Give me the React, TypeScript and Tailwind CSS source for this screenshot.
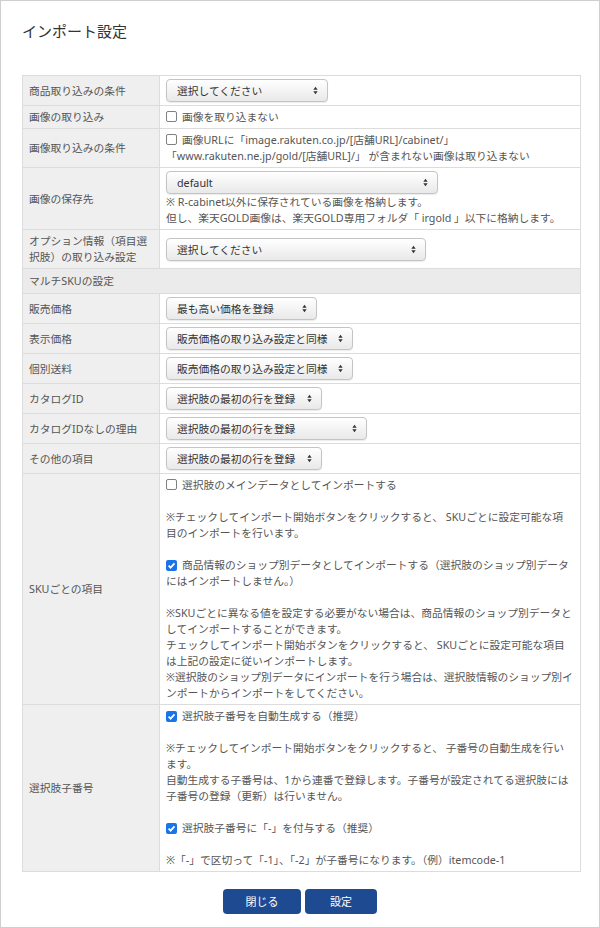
import React from 'react';

const cellBorder = 'border border-[#dcdcdc]';

function CheckBox({ checked = false }: { readonly checked?: boolean }): React.JSX.Element {
  return checked ? (
    <span className="mr-[5px] inline-flex h-[11px] w-[11px] items-center justify-center rounded-[2px] bg-[#1a73e8] align-[-1px]">
      <svg viewBox="0 0 10 10" className="h-[9px] w-[9px]">
        <path d="M1.8 5.2 4 7.4 8.3 2.6" fill="none" stroke="#fff" strokeWidth="1.9" />
      </svg>
    </span>
  ) : (
    <span className="mr-[5px] inline-block h-[11px] w-[11px] rounded-[2px] border border-[#808080] bg-white align-[-1px]" />
  );
}

function Select({
  value,
  width,
}: {
  readonly value: string;
  readonly width: string;
}): React.JSX.Element {
  return (
    <div
      className={`${width} flex h-[23px] items-center justify-between rounded-[4px] border border-[#c4c4c4] bg-gradient-to-b from-white to-[#e9e9e9] pl-[10px] pr-[9px] text-[#333] shadow-[0_1px_1px_rgba(0,0,0,0.08)]`}
    >
      <span className="whitespace-nowrap">{value}</span>
      <svg viewBox="0 0 6 10" className="h-[9px] w-[5px]">
        <path d="M3 0.5 5.6 4 0.4 4Z" fill="#333" />
        <path d="M3 9.5 5.6 6 0.4 6Z" fill="#333" />
      </svg>
    </div>
  );
}

function Lines({ lines }: { readonly lines: readonly React.ReactNode[] }): React.JSX.Element {
  return (
    <>
      {lines.map((line, index) => (
        <div key={index} className="h-[16px] whitespace-nowrap">
          {line}
        </div>
      ))}
    </>
  );
}

function Row({
  label,
  children,
}: {
  readonly label: React.ReactNode;
  readonly children: React.ReactNode;
}): React.JSX.Element {
  return (
    <tr>
      <td className={`${cellBorder} whitespace-nowrap bg-[#efefef] px-[6px] py-[3px] align-middle`}>
        {label}
      </td>
      <td className={`${cellBorder} bg-white px-[6px] py-[3px] align-top`}>{children}</td>
    </tr>
  );
}

const skuRows: ReadonlyArray<[string, string, string]> = [
  ['販売価格', '最も高い価格を登録', 'w-[151px]'],
  ['表示価格', '販売価格の取り込み設定と同様', 'w-[187px]'],
  ['個別送料', '販売価格の取り込み設定と同様', 'w-[187px]'],
  ['カタログID', '選択肢の最初の行を登録', 'w-[156px]'],
  ['カタログIDなしの理由', '選択肢の最初の行を登録', 'w-[201px]'],
  ['その他の項目', '選択肢の最初の行を登録', 'w-[156px]'],
];

export default function App(): React.JSX.Element {
  return (
    <div className="h-[928px] w-[600px] border border-[#cfcfcf] bg-white font-['Noto_Sans','Noto_Sans_CJK_JP',sans-serif] text-[10.75px] leading-[16px] text-[#555]">
      <h1 className="pl-[21px] pt-[20px] text-[15px] leading-[20px] text-[#333]">インポート設定</h1>
      <table className="ml-[21px] mt-[34px] w-[559px] table-fixed border-collapse">
        <colgroup>
          <col className="w-[137px]" />
          <col />
        </colgroup>
        <tbody>
          <Row label="商品取り込みの条件">
            <Select value="選択してください" width="w-[162px]" />
          </Row>
          <Row label="画像の取り込み">
            <Lines
              lines={[
                <>
                  <CheckBox />
                  画像を取り込まない
                </>,
              ]}
            />
          </Row>
          <Row label="画像取り込みの条件">
            <Lines
              lines={[
                <>
                  <CheckBox />
                  画像URLに「image.rakuten.co.jp/[店舗URL]/cabinet/」
                </>,
                '「www.rakuten.ne.jp/gold/[店舗URL]/」 が含まれない画像は取り込まない',
              ]}
            />
          </Row>
          <Row label="画像の保存先">
            <Select value="default" width="w-[272px]" />
            <Lines
              lines={[
                '※ R-cabinet以外に保存されている画像を格納します。',
                '但し、楽天GOLD画像は、楽天GOLD専用フォルダ「 irgold 」以下に格納します。',
              ]}
            />
          </Row>
          <Row
            label={
              <>
                オプション情報（項目選
                <br />
                択肢）の取り込み設定
              </>
            }
          >
            <div className="pt-[5px]">
              <Select value="選択してください" width="w-[260px]" />
            </div>
          </Row>
          <tr>
            <td colSpan={2} className={`${cellBorder} bg-[#ebebeb] px-[6px] py-[4px]`}>
              マルチSKUの設定
            </td>
          </tr>
          {skuRows.map(([label, value, width]) => (
            <Row key={label} label={label}>
              <Select value={value} width={width} />
            </Row>
          ))}
          <Row label="SKUごとの項目">
            <Lines
              lines={[
                <>
                  <CheckBox />
                  選択肢のメインデータとしてインポートする
                </>,
                '',
                '※チェックしてインポート開始ボタンをクリックすると、 SKUごとに設定可能な項',
                '目のインポートを行います。',
                '',
                <>
                  <CheckBox checked />
                  商品情報のショップ別データとしてインポートする（選択肢のショップ別データ
                </>,
                'にはインポートしません。）',
                '',
                '※SKUごとに異なる値を設定する必要がない場合は、商品情報のショップ別データと',
                'してインポートすることができます。',
                'チェックしてインポート開始ボタンをクリックすると、 SKUごとに設定可能な項目',
                'は上記の設定に従いインポートします。',
                '※選択肢のショップ別データにインポートを行う場合は、選択肢情報のショップ別イ',
                'ンポートからインポートをしてください。',
              ]}
            />
          </Row>
          <Row label="選択肢子番号">
            <Lines
              lines={[
                <>
                  <CheckBox checked />
                  選択肢子番号を自動生成する（推奨）
                </>,
                '',
                '※チェックしてインポート開始ボタンをクリックすると、 子番号の自動生成を行い',
                'ます。',
                '自動生成する子番号は、1から連番で登録します。子番号が設定されてる選択肢には',
                '子番号の登録（更新）は行いません。',
                '',
                <>
                  <CheckBox checked />
                  選択肢子番号に「-」を付与する（推奨）
                </>,
                '',
                '※「-」で区切って「-1」、「-2」が子番号になります。（例）itemcode-1',
              ]}
            />
          </Row>
        </tbody>
      </table>
      <div className="mt-[17px] flex justify-center gap-[4px]">
        <button className="h-[25px] w-[78px] rounded-[4px] bg-[#1e4a91] text-[11px] text-white">閉じる</button>
        <button className="h-[25px] w-[72px] rounded-[4px] bg-[#1e4a91] text-[11px] text-white">設定</button>
      </div>
    </div>
  );
}
